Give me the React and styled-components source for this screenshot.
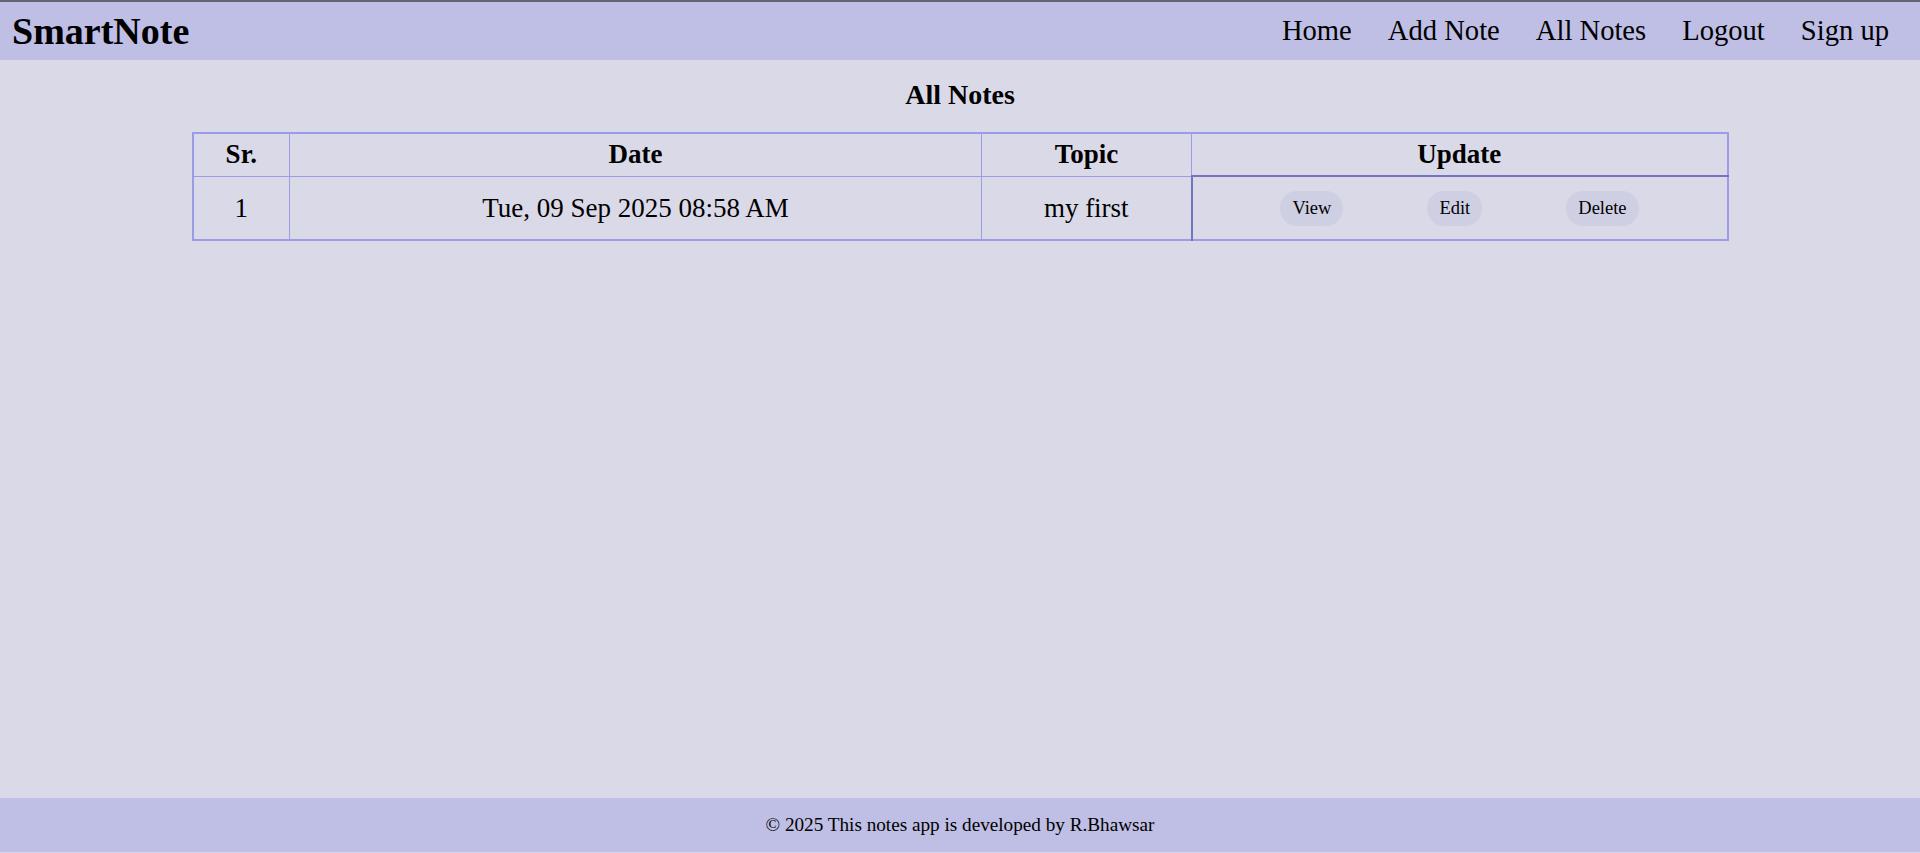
import styled, { createGlobalStyle } from "styled-components";

const GlobalStyle = createGlobalStyle`
  html, body {
    margin: 0;
    padding: 0;
    background: #dad9e8;
    font-family: "Liberation Serif", "Times New Roman", serif;
    color: #000;
  }
`;

const Page = styled.div`
  min-height: 100vh;
  display: flex;
  flex-direction: column;
`;

const Navbar = styled.header`
  height: 58px;
  border-top: 2px solid #5d6771;
  background: #bfbee5;
  display: flex;
  align-items: center;
  justify-content: space-between;
  padding: 0 13px 0 12px;
`;

const Brand = styled.div`
  font-size: 38px;
  font-weight: bold;
`;

const NavLinks = styled.nav`
  display: flex;
  align-items: center;
`;

const NavLink = styled.a`
  font-size: 28.6px;
  color: #000;
  text-decoration: none;
  margin: 0 18px;
  cursor: pointer;
`;

const Main = styled.main`
  flex: 1;
`;

const Title = styled.h2`
  margin: 18px 0 20px;
  font-size: 28px;
  line-height: 34px;
  text-align: center;
`;

const Table = styled.table`
  width: 80%;
  margin: 0 auto;
  border-collapse: collapse;
  border: 2px solid #9b9ce6;
  table-layout: fixed;
`;

const Th = styled.th`
  box-sizing: border-box;
  width: ${(p) => p.$w}px;
  border: 1px solid #9b9ce6;
  font-size: 27px;
  line-height: 31px;
  padding: 5px 8px;
  text-align: center;
`;

const Td = styled.td`
  border: 1px solid #9b9ce6;
  font-size: 27px;
  line-height: 31px;
  padding: 14px 8px 13px;
  text-align: center;
`;

const ActionCell = styled(Td)`
  border-top: 2px solid #7474c0;
  border-left: 2px solid #7474c0;
  font-size: 18px;
`;

const ActionButton = styled.button`
  font-family: "Liberation Serif", "Times New Roman", serif;
  font-size: 18.5px;
  line-height: 21px;
  padding: 7px 12px;
  margin: 0 42px;
  border: none;
  border-radius: 17px;
  background: #cfcfe4;
  color: #000;
  vertical-align: middle;
  cursor: pointer;
`;

const Footer = styled.footer`
  height: 54px;
  background: #bfbee5;
  border-bottom: 1px solid #d6d6ea;
  display: flex;
  align-items: center;
  justify-content: center;
  font-size: 19.2px;
`;

const notes = [
  { id: 1, date: "Tue, 09 Sep 2025 08:58 AM", topic: "my first" },
];

export default function App() {
  return (
    <>
      <GlobalStyle />
      <Page>
        <Navbar>
          <Brand>SmartNote</Brand>
          <NavLinks>
            <NavLink>Home</NavLink>
            <NavLink>Add Note</NavLink>
            <NavLink>All Notes</NavLink>
            <NavLink>Logout</NavLink>
            <NavLink>Sign up</NavLink>
          </NavLinks>
        </Navbar>

        <Main>
          <Title>All Notes</Title>
          <Table>
            <thead>
              <tr>
                <Th $w={97}>Sr.</Th>
                <Th $w={692}>Date</Th>
                <Th $w={210}>Topic</Th>
                <Th $w={536}>Update</Th>
              </tr>
            </thead>
            <tbody>
              {notes.map((n, i) => (
                <tr key={n.id}>
                  <Td>{i + 1}</Td>
                  <Td>{n.date}</Td>
                  <Td>{n.topic}</Td>
                  <ActionCell>
                    <ActionButton>View</ActionButton>
                    <ActionButton>Edit</ActionButton>
                    <ActionButton>Delete</ActionButton>
                  </ActionCell>
                </tr>
              ))}
            </tbody>
          </Table>
        </Main>

        <Footer>© 2025 This notes app is developed by R.Bhawsar</Footer>
      </Page>
    </>
  );
}
